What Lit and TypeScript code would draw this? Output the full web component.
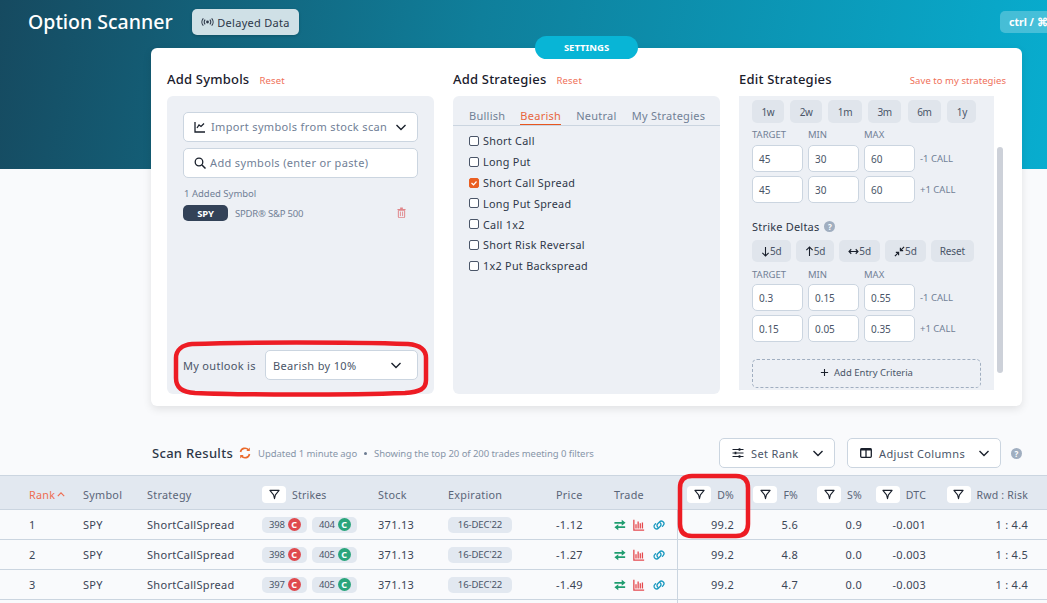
import { LitElement, html, css, svg } from "lit";
import { customElement } from "lit/decorators.js";

const chevron = html`<svg class="chev" viewBox="0 0 12 12" width="12" height="12"><path d="M1.5 4l4.5 4.5L10.500 4" fill="none" stroke="#1a202c" stroke-width="1.400"/></svg>`;
const funnel = html`<span class="fbtn"><svg viewBox="0 0 12 12" width="11" height="11"><path d="M1 1.500h10L7 6.500 6 10.500 5 6.500z" fill="none" stroke="#1a202c" stroke-width="1.200" stroke-linejoin="round"/></svg></span>`;
const help = (cls: string) => html`<span class="help ${cls}">?</span>`;

const strategies = ["Short Call", "Long Put", "Short Call Spread", "Long Put Spread", "Call 1x2", "Short Risk Reversal", "1x2 Put Backspread"];
const rows = [
  ["1", "398", "404", "-1.12", "99.2", "5.6", "0.9", "-0.001", "1 : 4.4"],
  ["2", "398", "405", "-1.27", "99.2", "4.8", "0.0", "-0.003", "1 : 4.5"],
  ["3", "397", "405", "-1.49", "99.2", "4.7", "0.0", "-0.003", "1 : 4.4"],
];

@customElement("app-root")
export class AppRoot extends LitElement {
  static styles = css`
    :host { display: block; position: relative; width: 1047px; height: 603px; overflow: hidden; background: #f9fafc; font-family: "Noto Sans", "Open Sans", sans-serif; color: #2d3748; }
    * { box-sizing: border-box; }
    .hero { height: 169px; background: linear-gradient(100deg, #164a60 0%, #0f7f9b 45%, #08adcf 100%); display: flex; align-items: flex-start; padding: 9px 0 0 28px; position: relative; }
    .title { font-size: 19.500px; font-weight: 500; color: #fff; line-height: 26px; width: 164px; }
    .delayed { width: 107px; height: 26px; background: #cfe0e6; border-radius: 5px; display: flex; align-items: center; justify-content: center; gap: 3px; font-size: 11px; letter-spacing: .3px; color: #2d3748; box-shadow: 0 1px 3px rgba(0,0,0,.2); }
    .kbd { margin-left: auto; margin-top: 2px; height: 22px; width: 60px; flex: none; margin-right: -13px; background: rgba(255,255,255,.25); border-radius: 5px; color: #fff; font-size: 10.500px; font-weight: 700; line-height: 22px; padding-left: 9px; white-space: nowrap; }

    .card { position: relative; width: 871px; height: 358px; margin: -121px 0 0 151px; background: #fff; border-radius: 6px; box-shadow: 0 3px 8px rgba(0,0,0,.1); display: grid; grid-template-columns: 267px 267px 264px; column-gap: 19px; padding: 20px 0 0 16px; }
    .settings { position: absolute; left: 384px; top: -12px; width: 103px; height: 23px; border-radius: 12px; background: #08b5d6; color: #fff; font-size: 9.500px; font-weight: 700; display: flex; align-items: center; justify-content: center; }
    .col-head { height: 28px; display: flex; align-items: baseline; padding: 2px 0 0 0; font-size: 13px; font-weight: 500; letter-spacing: .2px; color: #1a202c; }
    .link { font-size: 9.500px; font-weight: 400; color: #ef7059; margin-left: 10px; letter-spacing: .2px; }
    .link.save { margin-left: auto; margin-right: -3px; letter-spacing: .05px; white-space: nowrap; }
    .panel { background: #edf0f5; border-radius: 6px; height: 298px; }

    .symbols { display: flex; flex-direction: column; padding: 16px; }
    .field { height: 30px; background: #fff; border: 1px solid #cbd5e0; border-radius: 5px; display: flex; align-items: center; font-size: 11px; letter-spacing: .35px; color: #718096; padding: 0 10px 1px; flex: none; }
    .field .chev { margin-left: auto; }
    .field svg:first-child { margin-right: 5px; }
    .field.search svg:first-child { margin-right: 4px; }
    .gap { margin-top: 6px; }
    .added { font-size: 9.500px; color: #718096; margin-top: 9px; line-height: 13px; padding-left: 1px; }
    .sym { display: flex; align-items: center; margin-top: 5px; font-size: 9.500px; color: #718096; letter-spacing: -.2px; }
    .pill { width: 45px; height: 16px; background: #334258; color: #fff; border-radius: 5px; font-size: 9.500px; font-weight: 700; display: flex; align-items: center; justify-content: center; margin-right: 7px; }
    .sym svg { margin: -2px 12px 0 auto; }
    .outlook { margin-top: auto; margin-bottom: -2px; display: flex; align-items: center; justify-content: space-between; font-size: 11px; letter-spacing: .3px; color: #4a5568; }
    .outlook .field { width: 153px; color: #4a5568; padding: 0 10px 0 7px; }

    .tabs { display: flex; height: 30px; border-bottom: 1px solid #cbd5e0; padding: 12px 0 0 16px; font-size: 11px; letter-spacing: .26px; color: #718096; }
    .tab { height: 17px; margin-right: 15px; line-height: 15px; white-space: nowrap; }
    .tab.on { color: #e8663d; border-bottom: 1px solid #e8561f; }
    .check { display: flex; align-items: center; height: 20.800px; font-size: 10.800px; letter-spacing: .3px; color: #2d3748; padding-left: 16px; }
    .list { padding-top: 4.600px; }
    .box { width: 10px; height: 10px; border: 1.300px solid #4a5568; border-radius: 2px; margin-right: 4px; background: #fff; }
    .box.on { background: #ea5f22; border-color: #ea5f22; display: flex; align-items: center; justify-content: center; }

    .editwrap { display: flex; align-items: flex-start; }
    .edit { width: 255px; height: 294px; background: #edf0f5; padding: 4px 0 0 13px; overflow: hidden; flex: none; }
    .bar { width: 6px; height: 226px; margin: 51px 0 0 3px; background: #cdd1d9; border-radius: 3px; flex: none; }
    .btns { display: flex; gap: 6.400px; }
    .btn { height: 23px; padding: 0 9.500px; background: #e0e5ec; border-radius: 5px; font-size: 10px; color: #4a5568; display: flex; align-items: center; letter-spacing: -.4px; }
    .btns.d { gap: 5px; height: 22px; margin-top: 6px; }
    .btns.d .btn { height: 22px; padding: 0 9px; letter-spacing: -.1px; }
    .inhead { display: grid; grid-template-columns: 51px 51px 51px; column-gap: 5px; font-size: 9.500px; color: #718096; height: 13px; line-height: 14px; margin-top: 5px; }
    .d + .inhead { margin-top: 6px; height: 12px; }
    .inrow { display: flex; align-items: center; gap: 5px; margin-top: 4px; font-size: 9.500px; color: #718096; }
    .inp { width: 51px; height: 27px; background: #fff; border: 1px solid #cbd5e0; border-radius: 5px; font-size: 10px; color: #4a5568; display: flex; align-items: center; padding-left: 6px; }
    .deltas { display: flex; align-items: center; gap: 5px; margin-top: 16px; font-size: 11px; letter-spacing: .2px; color: #2d3748; height: 15px; }
    .help { width: 11px; height: 11px; border-radius: 50%; background: #a0aec0; color: #fff; font-size: 8px; font-weight: 700; display: flex; align-items: center; justify-content: center; }
    .dash { width: 229px; height: 29px; margin-top: 17px; border: 1px dashed #a0aec0; border-radius: 5px; display: flex; align-items: center; justify-content: center; gap: 5px; font-size: 9.500px; color: #4a5568; padding-bottom: 2px; }

    .results { display: flex; align-items: center; height: 30px; margin-top: 32px; padding-left: 152px; }
    .results h2 { margin: 0; font-size: 13px; font-weight: 500; letter-spacing: .3px; color: #2d3748; }
    .upd { font-size: 9.500px; color: #8795a8; margin-left: 7px; letter-spacing: -.06px; white-space: nowrap; display: flex; align-items: center; padding-top: 1px; }
    .dot { width: 3px; height: 3px; border-radius: 50%; background: #6b7a90; margin: 0 7px; }
    .results h2 + svg { margin-left: 6px; }
    .sel { height: 30px; background: #fff; border: 1px solid #cbd5e0; border-radius: 5px; display: flex; align-items: center; font-size: 11px; letter-spacing: .35px; color: #4a5568; padding: 0 10px 0 12px; gap: 7px; flex: none; }
    .sel .chev { margin-left: auto; }
    .sel.rank { width: 116px; margin-left: auto; }
    .sel.cols { width: 154px; margin-left: 12px; }
    .results .help { margin: 0 25px 0 10px; }

    .table { margin-top: 7px; border-top: 1px solid #cbd5e0; }
    .row { display: grid; grid-template-columns: 83px 64px 115px 116px 70px 108px 58px 64px 56px 64px 64px 64px 102px 19px; align-items: center; height: 30px; border-bottom: 1px solid #cbd5e0; font-size: 11px; letter-spacing: .3px; color: #3b4556; }
    .row.head { height: 34px; padding-top: 4px; background: #e2e8f0; color: #5a6578; font-size: 10.800px; }
    .row > :first-child { padding-left: 29px; }
    .cell { white-space: nowrap; }
    .rankh { color: #ef6c50; display: flex; align-items: center; gap: 2px; }
    .num { display: flex; justify-content: flex-end; align-items: center; }
    .th { gap: 6px; font-size: 10.500px; letter-spacing: .2px; }
    .left { justify-content: flex-start; }
    .div { align-self: stretch; box-shadow: -1px 0 0 #cbd5e0; }
    .tail { width: 1px; height: 4px; margin-left: 677px; background: #cbd5e0; }
    .fbtn { width: 24px; height: 17px; background: #fff; border-radius: 4px; display: inline-flex; align-items: center; justify-content: center; flex: none; }
    .chips { display: flex; gap: 5px; }
    .chip { width: 45px; height: 16px; border-radius: 5px; background: #e2e8f0; font-size: 9.500px; letter-spacing: -.2px; display: flex; align-items: center; gap: 3px; padding-left: 7px; color: #4a5568; }
    .c { width: 13px; height: 13px; border-radius: 50%; color: #fff; font-size: 9px; font-weight: 700; display: flex; align-items: center; justify-content: center; letter-spacing: 0; }
    .c.r { background: #df4a4f; }
    .c.g { background: #2ba57c; }
    .exp { width: 64px; height: 16px; background: #e2e8f0; border-radius: 5px; font-size: 9.500px; letter-spacing: -.1px; display: flex; align-items: center; justify-content: center; color: #4a5568; }
    .trade { display: flex; gap: 7px; align-items: center; }

    .marks { position: absolute; left: 0; top: 0; width: 1047px; height: 603px; pointer-events: none; }
  `;

  private inputs(vals: string[][]) {
    return html`<div class="inhead"><span>TARGET</span><span>MIN</span><span>MAX</span></div>
      ${vals.map((v, i) => html`<div class="inrow">${v.map((x) => html`<span class="inp">${x}</span>`)}<span>${i ? "+1 CALL" : "-1 CALL"}</span></div>`)}`;
  }

  private tradeIcons() {
    return html`<span class="trade">
      <svg viewBox="0 0 14 14" width="12" height="12"><path d="M0.500 4.500h9M13 9.500H4" fill="none" stroke="#1f9d6f" stroke-width="1.800"/><path d="M9 1l4.500 3.500L9 8zM5 6L0.500 9.500 5 13z" fill="#1f9d6f"/></svg>
      <svg viewBox="0 0 14 14" width="12" height="12"><path d="M1 1v12h12" fill="none" stroke="#e5484d" stroke-width="1.500"/><path d="M3.500 11V6M6 11V3M8.500 11V5M11 11V4" fill="none" stroke="#e5484d" stroke-width="1.500"/></svg>
      <svg viewBox="0 0 16 14" width="14" height="12"><path d="M6.500 9.500a3 3 0 0 1 0-4l2-2a3 3 0 0 1 4.500 4l-1 1M9.500 4.500a3 3 0 0 1 0 4l-2 2a3 3 0 0 1-4.500-4l1-1" fill="none" stroke="#1c9ac0" stroke-width="1.500" stroke-linecap="round"/></svg>
    </span>`;
  }

  render() {
    return html`
      <div class="hero">
        <div class="title">Option Scanner</div>
        <div class="delayed">
          <svg viewBox="0 0 14 10" width="13" height="10"><circle cx="7" cy="5" r="1.500" fill="#2d3748"/><path d="M4.500 2.500a3.500 3.500 0 0 0 0 5M9.500 2.500a3.500 3.500 0 0 1 0 5M2.500 1a6 6 0 0 0 0 8M11.500 1a6 6 0 0 1 0 8" fill="none" stroke="#2d3748" stroke-width="1.200"/></svg>
          Delayed Data
        </div>
        <div class="kbd">ctrl / ⌘</div>
      </div>

      <div class="card">
        <div class="settings">SETTINGS</div>
        <div>
          <div class="col-head">Add Symbols<span class="link">Reset</span></div>
          <div class="panel symbols">
            <div class="field">
              <svg viewBox="0 0 12 12" width="12" height="12"><path d="M1 1v10h10M3 7l2-3 2 1.500L10 2.500" fill="none" stroke="#1a202c" stroke-width="1.300"/></svg>
              Import symbols from stock scan ${chevron}
            </div>
            <div class="field gap search">
              <svg viewBox="0 0 12 12" width="12" height="12"><circle cx="5" cy="5" r="3.800" fill="none" stroke="#1a202c" stroke-width="1.300"/><path d="M8 8l3.500 3.500" stroke="#1a202c" stroke-width="1.500"/></svg>
              Add symbols (enter or paste)
            </div>
            <div class="added">1 Added Symbol</div>
            <div class="sym">
              <span class="pill">SPY</span>SPDR® S&amp;P 500
              <svg viewBox="0 0 10 12" width="9" height="11"><path d="M0.500 2h9v1.200h-9zM3.500 .5h3V2h-3z" fill="#e0868a"/><path d="M1.500 3.500h7V11a.8.8 0 0 1-.8.8H2.300a.8.8 0 0 1-.8-.8z" fill="none" stroke="#e0868a" stroke-width="1.100"/><path d="M3.800 5v5M6.200 5v5" stroke="#e0868a"/></svg>
            </div>
            <div class="outlook">My outlook is <div class="field">Bearish by 10% ${chevron}</div></div>
          </div>
        </div>

        <div>
          <div class="col-head">Add Strategies<span class="link">Reset</span></div>
          <div class="panel">
            <div class="tabs"><span class="tab">Bullish</span><span class="tab on">Bearish</span><span class="tab">Neutral</span><span class="tab">My Strategies</span></div>
            <div class="list">
              ${strategies.map((s, i) => html`<div class="check">
                ${i === 2
                  ? html`<span class="box on"><svg viewBox="0 0 8 8" width="8" height="8"><path d="M1.500 4l2 1.800L6.500 2.500" fill="none" stroke="#fff" stroke-width="1.200"/></svg></span>`
                  : html`<span class="box"></span>`}${s}</div>`)}
            </div>
          </div>
        </div>

        <div>
          <div class="col-head">Edit Strategies<span class="link save">Save to my strategies</span></div>
          <div class="editwrap">
            <div class="edit">
              <div class="btns">${["1w", "2w", "1m", "3m", "6m", "1y"].map((b) => html`<span class="btn">${b}</span>`)}</div>
              ${this.inputs([["45", "30", "60"], ["45", "30", "60"]])}
              <div class="deltas">Strike Deltas ${help("")}</div>
              <div class="btns d">
                <span class="btn"><svg viewBox="0 0 10 12" width="9" height="11"><path d="M5 1v10M1.500 7.500L5 11l3.500-3.500" fill="none" stroke="#1a202c" stroke-width="1.200"/></svg>5d</span>
                <span class="btn"><svg viewBox="0 0 10 12" width="9" height="11"><path d="M5 11V1M1.500 4.500L5 1l3.500 3.500" fill="none" stroke="#1a202c" stroke-width="1.200"/></svg>5d</span>
                <span class="btn"><svg viewBox="0 0 12 10" width="11" height="9"><path d="M1 5h10M3.500 2.500L1 5l2.500 2.500M8.500 2.500L11 5 8.500 7.500" fill="none" stroke="#1a202c" stroke-width="1.200"/></svg>5d</span>
                <span class="btn"><svg viewBox="0 0 12 12" width="11" height="11"><path d="M1 11l3.500-3.500M11 1L7.500 4.500M2 7h3v3M10 5H7V2" fill="none" stroke="#1a202c" stroke-width="1.300"/></svg>5d</span>
                <span class="btn">Reset</span>
              </div>
              ${this.inputs([["0.3", "0.15", "0.55"], ["0.15", "0.05", "0.35"]])}
              <div class="dash"><svg viewBox="0 0 10 10" width="9" height="9"><path d="M5 1v8M1 5h8" stroke="#1a202c" stroke-width="1.200"/></svg>Add Entry Criteria</div>
            </div>
            <div class="bar"></div>
          </div>
        </div>
      </div>

      <div class="results">
        <h2>Scan Results</h2>
        <svg viewBox="0 0 12 12" width="12" height="12"><path d="M1.500 5a4.500 4.500 0 0 1 8-2M10.500 7a4.500 4.500 0 0 1-8 2" fill="none" stroke="#ea6a2c" stroke-width="1.600"/><path d="M10.800 .5v3.500H7.300zM1.200 11.500V8h3.500z" fill="#ea6a2c"/></svg>
        <span class="upd">Updated 1 minute ago<span class="dot"></span>Showing the top 20 of 200 trades meeting 0 filters</span>
        <div class="sel rank">
          <svg viewBox="0 0 12 12" width="12" height="12"><path d="M0.500 2.500h11M0.500 6h11M0.500 9.500h11" stroke="#1a202c" stroke-width="1.100"/><path d="M7.500 1.200v2.600M3.500 4.700v2.600M7.500 8.200v2.600" stroke="#1a202c" stroke-width="1.800"/></svg>
          Set Rank ${chevron}
        </div>
        <div class="sel cols">
          <svg viewBox="0 0 12 12" width="12" height="12"><rect x="0.700" y="1.700" width="10.600" height="8.600" rx="1" fill="none" stroke="#1a202c" stroke-width="1.300"/><path d="M0.700 2.500h10.600" stroke="#1a202c" stroke-width="2"/><path d="M6 2v8" stroke="#1a202c" stroke-width="1.300"/></svg>
          Adjust Columns ${chevron}
        </div>
        ${help("")}
      </div>

      <div class="table">
        <div class="row head">
          <span class="cell rankh">Rank<svg viewBox="0 0 10 8" width="8" height="7"><path d="M1 6l4-4 4 4" fill="none" stroke="#ef6c50" stroke-width="1.400"/></svg></span>
          <span class="cell">Symbol</span>
          <span class="cell">Strategy</span>
          <span class="cell num th left">${funnel}Strikes</span>
          <span class="cell">Stock</span>
          <span class="cell">Expiration</span>
          <span class="cell">Price</span>
          <span class="cell">Trade</span>
          <span class="cell num th">${funnel}D%</span>
          <span class="cell num th">${funnel}F%</span>
          <span class="cell num th">${funnel}S%</span>
          <span class="cell num th">${funnel}DTC</span>
          <span class="cell num th">${funnel}Rwd : Risk</span>
          <span></span>
        </div>
        ${rows.map((r) => html`<div class="row">
          <span class="cell">${r[0]}</span>
          <span class="cell">SPY</span>
          <span class="cell">ShortCallSpread</span>
          <span class="chips">
            <span class="chip">${r[1]}<span class="c r">C</span></span>
            <span class="chip">${r[2]}<span class="c g">C</span></span>
          </span>
          <span class="cell">371.13</span>
          <span class="exp">16-DEC'22</span>
          <span class="cell">${r[3]}</span>
          ${this.tradeIcons()}
          <span class="cell num div">${r[4]}</span>
          <span class="cell num">${r[5]}</span>
          <span class="cell num">${r[6]}</span>
          <span class="cell num">${r[7]}</span>
          <span class="cell num">${r[8]}</span>
          <span></span>
        </div>`)}
        <div class="tail"></div>
      </div>

      <svg class="marks" viewBox="0 0 1047 603">
        ${svg`<path d="M192 344 C240 342 350 342 408 344 C420 345 426 350 426 358 L426 380 C426 389 420 392 405 393 C350 395 240 395 195 393 C182 392 176 388 176 378 L176 358 C176 350 182 345 192 344 Z" fill="none" stroke="#ed1c24" stroke-width="4.500"/>
        <path d="M692 476 L736 476 C744 476 748 480 748 488 L748 524 C748 532 744 536 736 536 L692 536 C684 536 680 532 680 524 L680 488 C680 480 684 476 692 476 Z" fill="none" stroke="#ed1c24" stroke-width="4.500"/>`}
      </svg>
    `;
  }
}
